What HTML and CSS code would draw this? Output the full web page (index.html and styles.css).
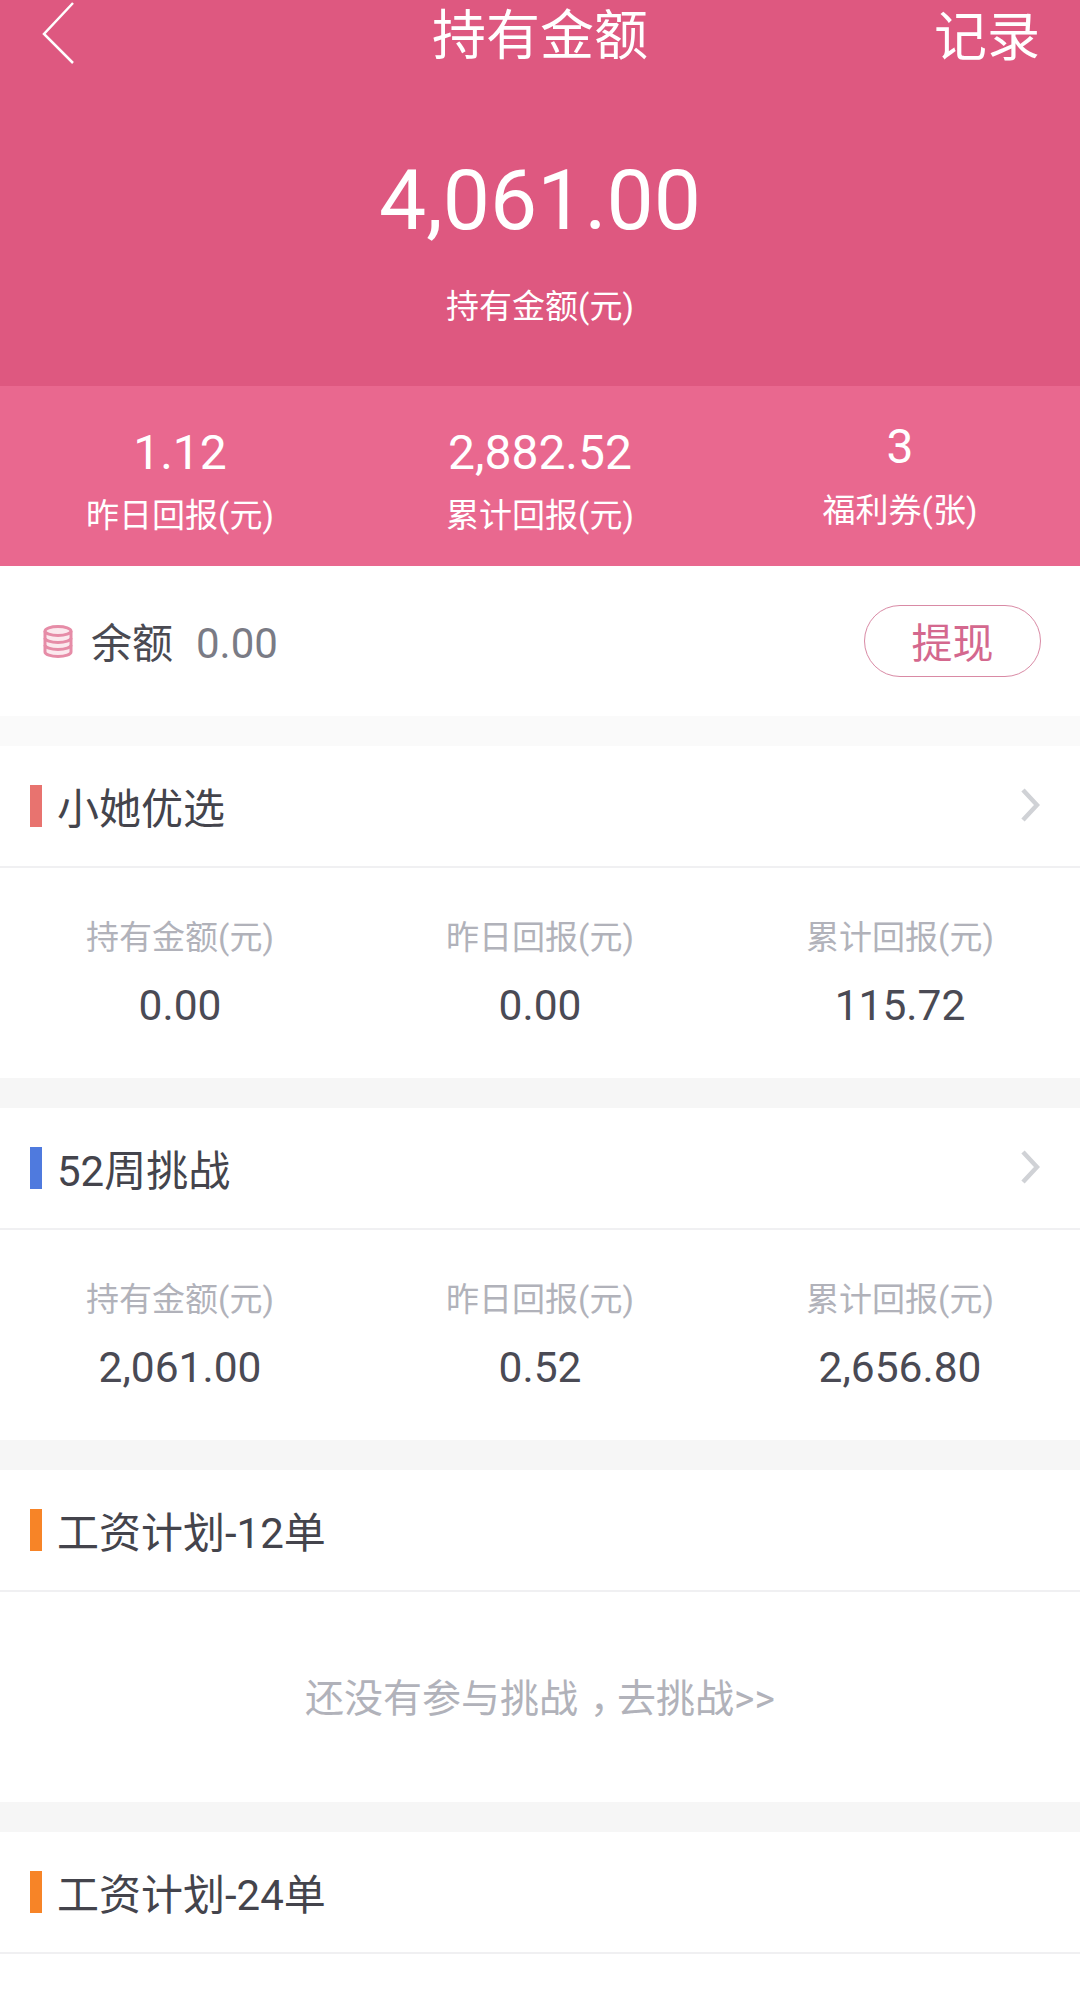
FILE: index.html
```html
<!DOCTYPE html>
<html lang="zh-CN">
<head>
    <meta charset="UTF-8">
    <meta name="viewport" content="width=device-width, initial-scale=1.0">
    <title>持有金额</title>
    <link rel="stylesheet" href="styles.css">
</head>
<body>
    <header class="hero">
        <div class="topbar">
            <svg class="back" width="34" height="64" viewBox="0 0 34 64"><path d="M32 2 L3 33 L32 62" fill="none" stroke="#fff" stroke-width="2.5"/></svg>
            <h1>持有金额</h1>
            <span class="record">记录</span>
        </div>
        <div class="total">4,061.00</div>
        <div class="total-label">持有金额(元)</div>
    </header>

    <div class="summary">
        <div class="summary-item">
            <div class="summary-value">1.12</div>
            <div class="summary-label">昨日回报(元)</div>
        </div>
        <div class="summary-item">
            <div class="summary-value">2,882.52</div>
            <div class="summary-label">累计回报(元)</div>
        </div>
        <div class="summary-item raised">
            <div class="summary-value">3</div>
            <div class="summary-label">福利券(张)</div>
        </div>
    </div>

    <div class="balance">
        <svg class="coins" width="30" height="33" viewBox="0 0 30 33" fill="#fbe9ee" stroke="#e68ca7" stroke-width="3">
            <path d="M2 6v21c0 2.500 5.800 4.500 13 4.500s13-2 13-4.500V6"/>
            <ellipse cx="15" cy="6" rx="13" ry="4.500"/>
            <path d="M2 13c0 2.500 5.800 4.500 13 4.500s13-2 13-4.500" fill="none"/>
            <path d="M2 20c0 2.500 5.800 4.500 13 4.500s13-2 13-4.500" fill="none"/>
        </svg>
        <div class="balance-text">
            <span class="balance-name">余额</span>
            <span class="balance-value">0.00</span>
        </div>
        <span class="withdraw">提现</span>
    </div>
    <div class="divider"></div>

    <section class="card">
        <div class="card-head">
            <i class="mark red"></i>
            <span class="card-title">小她优选</span>
            <svg class="arrow" width="20" height="34" viewBox="0 0 20 34"><path d="M3 2 L17 17 L3 32" fill="none" stroke="#d0d2d6" stroke-width="4.500"/></svg>
        </div>
        <div class="card-body">
            <div class="cell"><div class="cell-label">持有金额(元)</div><div class="cell-value">0.00</div></div>
            <div class="cell"><div class="cell-label">昨日回报(元)</div><div class="cell-value">0.00</div></div>
            <div class="cell"><div class="cell-label">累计回报(元)</div><div class="cell-value">115.72</div></div>
        </div>
    </section>

    <section class="card">
        <div class="card-head">
            <i class="mark blue"></i>
            <span class="card-title">52周挑战</span>
            <svg class="arrow" width="20" height="34" viewBox="0 0 20 34"><path d="M3 2 L17 17 L3 32" fill="none" stroke="#d0d2d6" stroke-width="4.500"/></svg>
        </div>
        <div class="card-body">
            <div class="cell"><div class="cell-label">持有金额(元)</div><div class="cell-value">2,061.00</div></div>
            <div class="cell"><div class="cell-label">昨日回报(元)</div><div class="cell-value">0.52</div></div>
            <div class="cell"><div class="cell-label">累计回报(元)</div><div class="cell-value">2,656.80</div></div>
        </div>
    </section>

    <section class="card">
        <div class="card-head">
            <i class="mark orange"></i>
            <span class="card-title">工资计划-12单</span>
        </div>
        <div class="card-empty">还没有参与挑战<span class="comma">，</span>去挑战&gt;&gt;</div>
    </section>

    <section class="card last">
        <div class="card-head">
            <i class="mark orange"></i>
            <span class="card-title">工资计划-24单</span>
        </div>
    </section>
</body>
</html>
```

FILE: styles.css
```css
html, body {
    margin: 0;
    height: 2007px;
    overflow: hidden;
    background-color: #f6f6f6;
    font-family: Roboto, "Noto Sans CJK SC", sans-serif;
}

.hero {
    height: 386px;
    background-color: #de5880;
    color: #fff;
    text-align: center;
}

.topbar {
    height: 74px;
    display: flex;
    justify-content: center;
    align-items: center;
    position: relative;
}

.topbar h1 {
    margin: 0;
    font-size: 54px;
    font-weight: 400;
    line-height: 74px;
}

.back {
    position: absolute;
    left: 41px;
    top: 1px;
}

.record {
    position: absolute;
    right: 40px;
    top: 1px;
    font-size: 53px;
    line-height: 74px;
}

.total {
    margin-top: 82px;
    font-size: 84px;
    line-height: 90px;
}

.total-label {
    margin-top: 39px;
    font-size: 33px;
    line-height: 44px;
}

.summary {
    height: 180px;
    display: grid;
    grid-template-columns: repeat(3, 1fr);
    background-color: #e9688f;
    color: #fff;
    text-align: center;
}

.summary-item {
    padding-top: 40px;
}

.summary-item.raised {
    padding-top: 34px;
}

.summary-value {
    font-size: 48px;
    line-height: 54px;
}

.summary-label {
    margin-top: 14px;
    font-size: 33px;
    line-height: 44px;
}

.raised .summary-label {
    margin-top: 15px;
}

.balance {
    height: 150px;
    display: flex;
    align-items: center;
    padding: 0 39px 0 43px;
    background-color: #fff;
}

.coins {
    margin-right: 18px;
}

.balance-text {
    display: flex;
    align-items: baseline;
    margin-bottom: 2px;
}

.balance-name {
    font-size: 41px;
    color: #4a4a52;
}

.balance-value {
    margin-left: 23px;
    font-size: 42px;
    color: #7a7b85;
}

.withdraw {
    margin-left: auto;
    width: 175px;
    height: 67px;
    padding-top: 3px;
    border: 1.5px solid #d98aa5;
    border-radius: 36px;
    text-align: center;
    font-size: 41px;
    line-height: 70px;
    color: #d4688e;
}

.divider {
    height: 30px;
    background-color: #fafafa;
}

.card {
    margin-bottom: 30px;
    background-color: #fff;
}

.card.last {
    height: 175px;
    margin-bottom: 0;
}

.card-head {
    height: 122px;
    display: flex;
    align-items: center;
    padding: 0 40px 0 30px;
    border-bottom: 2px solid #f0f0f2;
    box-sizing: border-box;
}

.mark {
    width: 12px;
    height: 42px;
    margin-right: 15px;
}

.mark.red { background-color: #e8736f; }
.mark.blue { background-color: #4f7ade; }
.mark.orange { background-color: #f78427; }

.card-title {
    font-size: 42px;
    color: #44444c;
    padding-bottom: 2px;
}

.arrow {
    margin-left: auto;
    margin-bottom: 2px;
}

.card-body {
    height: 210px;
    display: grid;
    grid-template-columns: repeat(3, 1fr);
    text-align: center;
}

.cell {
    padding-top: 48px;
}

.cell-label {
    font-size: 33px;
    line-height: 44px;
    color: #b1b2ba;
}

.cell-value {
    margin-top: 23px;
    font-size: 42.5px;
    line-height: 46px;
    color: #4a4a54;
}

.card-empty {
    height: 210px;
    line-height: 214px;
    text-align: center;
    font-size: 39px;
    color: #b1b2ba;
}

.comma {
    margin-left: 0.3em;
    letter-spacing: -0.3em;
}
```
